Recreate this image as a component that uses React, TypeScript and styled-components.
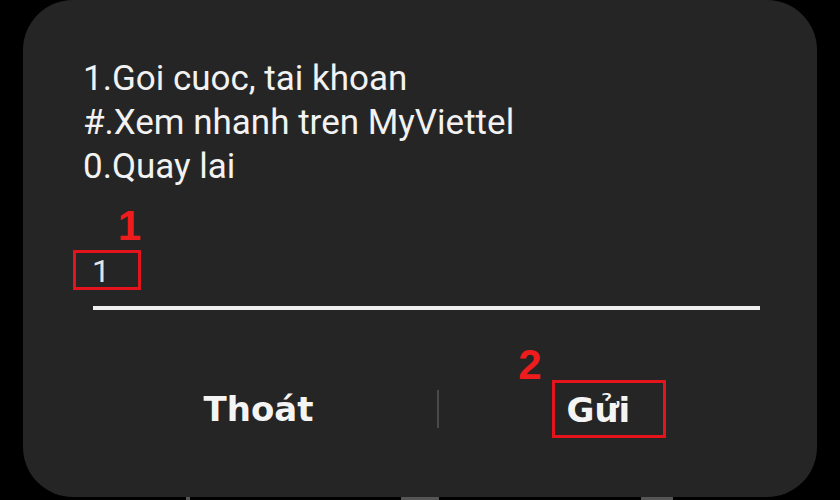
import React from "react";
import styled, { createGlobalStyle } from "styled-components";

const Global = createGlobalStyle`
  html, body { margin: 0; padding: 0; background: #000; }
  body { width: 840px; height: 500px; overflow: hidden; font-family: Roboto, "Noto Sans", sans-serif; }
`;

const Screen = styled.div`
  width: 840px;
  height: 500px;
  background: #000;
  display: flex;
  flex-direction: column;
`;

const Dialog = styled.div`
  margin-left: 23px;
  width: 794px;
  height: 497px;
  background: #252525;
  border-radius: 50px;
  display: flex;
  flex-direction: column;
  box-sizing: border-box;
`;

const Message = styled.div`
  padding: 57px 0 0 60px;
  font-size: 35px;
  line-height: 44px;
  color: #f2f2f2;
  font-weight: 400;
`;

const InputField = styled.div`
  margin-top: 61px;
  margin-left: 50px;
  display: flex;
  flex-direction: column;
`;

const Highlight = styled.div<{ $w: number; $h: number }>`
  position: relative;
  box-sizing: border-box;
  width: ${(p) => p.$w}px;
  height: ${(p) => p.$h}px;
  border: 3px solid #e3141b;
  display: flex;
  align-items: center;
`;

const Marker = styled.span<{ $pos: "top-right" | "top-left" }>`
  position: absolute;
  font-family: "Liberation Sans", Arial, sans-serif;
  font-weight: 700;
  font-size: 42px;
  line-height: 1;
  color: #ee1c1c;
  ${(p) =>
    p.$pos === "top-right"
      ? `right: -3px; bottom: calc(100% + 6px);`
      : `right: calc(100% + 13px); bottom: calc(100% - 3px);`}
`;

const Value = styled.span`
  padding-left: 16px;
  padding-top: 2px;
  font-size: 32px;
  font-weight: 400;
  color: #e4e4e4;
  line-height: 1;
`;

const Underline = styled.div`
  margin-top: 16px;
  margin-left: 20px;
  width: 667px;
  height: 4px;
  background: #f0f0f0;
`;

const ButtonRow = styled.div`
  margin-top: 60px;
  margin-left: 57px;
  width: 680px;
  height: 78px;
  display: grid;
  grid-template-columns: 357px 2px 1fr;
  align-items: center;
`;

const ButtonCell = styled.div`
  display: flex;
  justify-content: center;
  align-items: center;
`;

const ButtonText = styled.span`
  font-family: "DejaVu Sans", Roboto, sans-serif;
  font-size: 34px;
  font-weight: 700;
  color: #f4f4f4;
  line-height: 1;
`;

const Divider = styled.div`
  width: 2px;
  height: 38px;
  background: #4a4a4a;
`;

const SendBox = styled.div`
  position: relative;
  margin-left: 18px;
  box-sizing: border-box;
  width: 114px;
  height: 58px;
  border: 3px solid #e3141b;
  display: flex;
  align-items: center;
  padding-left: 12px;
  padding-top: 2px;
`;

const NavStrip = styled.div`
  height: 3px;
  display: flex;
`;

const NavBit = styled.div<{ $left: number; $w: number }>`
  margin-left: ${(p) => p.$left}px;
  width: ${(p) => p.$w}px;
  height: 3px;
  background: #555;
`;

export default function App() {
  return (
    <Screen>
      <Global />
      <Dialog>
        <Message>
          <div>1.Goi cuoc, tai khoan</div>
          <div>#.Xem nhanh tren MyViettel</div>
          <div>0.Quay lai</div>
        </Message>
        <InputField>
          <Highlight $w={68} $h={40}>
            <Marker $pos="top-right">1</Marker>
            <Value>1</Value>
          </Highlight>
          <Underline />
        </InputField>
        <ButtonRow>
          <ButtonCell>
            <ButtonText>Thoát</ButtonText>
          </ButtonCell>
          <Divider />
          <ButtonCell>
            <SendBox>
              <Marker $pos="top-left">2</Marker>
              <ButtonText>Gửi</ButtonText>
            </SendBox>
          </ButtonCell>
        </ButtonRow>
      </Dialog>
      <NavStrip>
        <NavBit $left={186} $w={4} />
        <NavBit $left={211} $w={38} />
        <NavBit $left={202} $w={32} />
      </NavStrip>
    </Screen>
  );
}
